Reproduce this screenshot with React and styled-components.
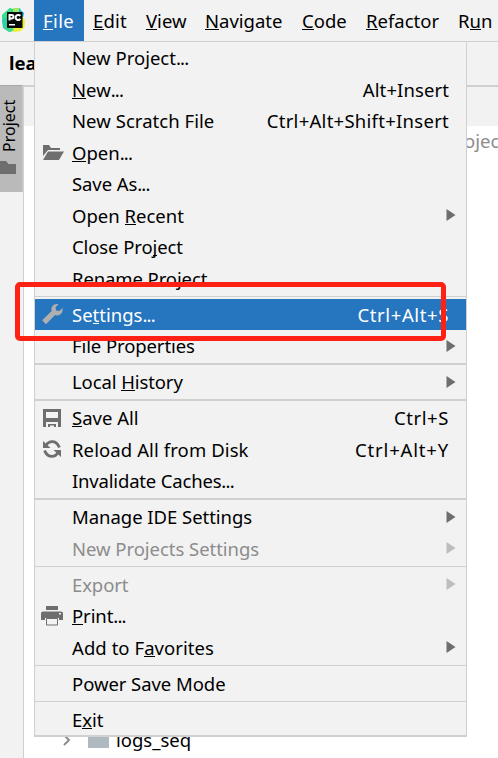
import React from "react";
import styled, { createGlobalStyle } from "styled-components";

const Global = createGlobalStyle`
  * { box-sizing: border-box; }
  body { margin: 0; overflow: hidden; background: #fff; }
`;

const Window = styled.div`
  position: relative;
  display: flex;
  flex-direction: column;
  width: 498px;
  height: 758px;
  overflow: hidden;
  background: #fff;
  color: #000;
  font: 18.5px "Noto Sans", "Open Sans", sans-serif;
  white-space: pre;
`;

const MenuBar = styled.header`
  display: flex;
  flex: none;
  height: 42px;
  background: #f2f2f2;
  border-bottom: 1px solid #d0d0d0;
`;

const Logo = styled.div`
  width: 34px;
  padding: 7px 0 0 1px;
`;

const MenuTitle = styled.div`
  flex: none;
  width: ${(p) => p.$width}px;
  height: 41px;
  padding-left: 9px;
  line-height: 42px;
  letter-spacing: ${(p) => p.$track || 0}px;
  color: ${(p) => (p.$open ? "#fff" : "#000")};
  background: ${(p) => (p.$open ? "#2675bf" : "transparent")};
`;

const Key = styled.span`
  box-shadow: inset 0 -1px 0 currentColor;
  display: inline-block;
  height: 21px;
  line-height: 23px;
`;

const Breadcrumb = styled.div`
  flex: none;
  height: 45px;
  padding-left: 9px;
  line-height: 42px;
  font-weight: 700;
  background: #f2f2f2;
  border-bottom: 2px solid #d0d0d0;
`;

const Body = styled.div`
  display: flex;
  flex: 1;
  min-height: 0;
`;

const Stripe = styled.aside`
  flex: none;
  width: 24px;
  margin-top: -2px;
  background: #f2f2f2;
  border-right: 1px solid #d0d0d0;
`;

const StripeButton = styled.div`
  display: flex;
  flex-direction: column;
  align-items: flex-start;
  width: 23px;
  height: 107px;
  padding-top: 11px;
  background: #bababa;
  border-top: 1px solid #a8a8a8;
  border-right: 1px solid #c8c8c8;
`;

const StripeLabel = styled.span`
  writing-mode: vertical-rl;
  transform: rotate(180deg);
  width: 18px;
  height: 55px;
  line-height: 18px;
  font-size: 16px;
`;

const FolderIcon = styled.svg`
  display: block;
  margin-top: 9px;
`;

const Panel = styled.main`
  display: flex;
  flex: 1;
  flex-direction: column;
`;

const PanelHeader = styled.div`
  flex: none;
  height: 39px;
  background: #f2f2f2;
`;

const Path = styled.div`
  flex: 1;
  padding-left: 440px;
  line-height: 30px;
  color: #8c8c8c;
`;

const TreeRow = styled.div`
  display: flex;
  align-items: center;
  height: 34px;
  padding: 0 0 3px 38px;
`;

const Swatch = styled.i`
  width: 21px;
  height: 16px;
  margin: 0 7px 0 16px;
  background: #aeb9c0;
`;

const Popup = styled.nav`
  position: absolute;
  left: 34px;
  top: 41px;
  width: 433px;
  height: 696px;
  background: #f2f2f2;
  border: 1px solid #d0d0d0;
  border-bottom-width: 2px;
`;

const Item = styled.div`
  display: flex;
  align-items: center;
  height: 31.5px;
  padding: 0 17px 0 7px;
  color: ${(p) => (p.$active ? "#fff" : p.$disabled ? "#8c8c8c" : "#000")};
  background: ${(p) => (p.$active ? "#2675bf" : "transparent")};
`;

const IconSlot = styled.span`
  display: flex;
  width: 30px;
`;

const Label = styled.span`
  flex: 1;
  line-height: 31px;
  letter-spacing: ${(p) => p.$track || 0}px;
`;

const Ellipsis = styled.span`
  letter-spacing: -0.8px;
`;

const Shortcut = styled.span`
  line-height: 31px;
  letter-spacing: ${(p) => p.$track || 0}px;
`;

const Arrow = styled.svg`
  display: block;
  margin-right: -7px;
  fill: ${(p) => (p.$disabled ? "#bdbdbd" : "#6e6e6e")};
`;

const PrintIcon = styled.svg`
  margin: 1px 0 0 -1px;
`;

const Separator = styled.div`
  height: 4.5px;
  padding-top: ${(p) => (p.$thick ? 1.5 : 2)}px;
  &::before {
    content: "";
    display: block;
    height: ${(p) => (p.$thick ? 2 : 1)}px;
    background: #d0d0d0;
  }
`;

const Highlight = styled.div`
  position: absolute;
  left: 15px;
  top: 282px;
  width: 431px;
  height: 59px;
  border: 5px solid #ff2113;
  border-radius: 5px;
`;

function PyCharm() {
  return (
    <svg width="25" height="26" viewBox="0 0 25 26">
      <path d="M1 8 9 1l5 2 5-2 3 8-6 14-8 2-6-4z" fill="#21d789" />
      <path d="M2 7 9 1l2 4-6 8-4 3z" fill="#3be08a" />
      <path d="M1 12l5-2v12l-4-2z" fill="#2fd0a8" />
      <path d="M12 1l6 0 1 5-7 1z" fill="#a5ea5c" />
      <path d="M18 2l5 4-1 5-4-1z" fill="#18b6e8" />
      <path d="M20 9l4 4-.5 7-3.500 4-7 1-4-3 11-3z" fill="#f0ee35" />
      <path d="M3 20l8 0 2 3-4 2z" fill="#45dc90" />
      <path d="M6 5h15.500v16H6z" fill="#080808" />
      <g fill="none" stroke="#fff" strokeWidth="2">
        <path d="M8.500 13.500V8h2.300a1.700 1.700 0 0 1 0 3.400H9" />
        <path d="M19.500 8.800c-2.300-1.900-5.200-.4-4.800 2.200.3 2.200 3 2.700 4.800 1" />
      </g>
      <path d="M8 17h6v1.500H8z" fill="#fff" />
    </svg>
  );
}

const icons = {
  open: (
    <svg width="22" height="17" viewBox="0 0 22 17" fill="#6e6e6e">
      <path d="M1 1h6l2 3h9v2H6L1 12z" />
      <path d="M6 7.5h16L17 16H1z" />
    </svg>
  ),
  wrench: (
    <svg width="22" height="22" viewBox="0 0 22 22" fill="#afafaf">
      <path d="M.2 17.3 9.6 8C8.9 5.4 10 2.8 12.2 1.6c1.3-.7 2.8-.8 4.3-.4l-3 3 .6 3.2 3.2.6 3.1-3c.8 3-.4 5.7-2.7 6.8-1.4.7-3 .8-4.5.2L3.9 21.3z" />
    </svg>
  ),
  save: (
    <svg width="20" height="20" viewBox="0 0 20 20" fill="#6e6e6e">
      <path fillRule="evenodd" d="M1 1h18v18h-3v-5H4v5H1zm3 3v6h12V4z" />
      <path d="M6 16h8v3h-2v-1.500H8V19H6z" />
    </svg>
  ),
  reload: (
    <svg width="20" height="20" viewBox="0 0 20 20">
      <g fill="none" stroke="#6e6e6e" strokeWidth="2.900">
        <path d="M4 6.500C7.2 1 14.5 1 17.4 8.500" />
        <path d="M16 13.500C12.8 19 5.5 19 2.600 11.500" />
      </g>
      <path d="M1 2v7h7.500zM19 18v-7h-7.500z" fill="#6e6e6e" />
    </svg>
  ),
  print: (
    <PrintIcon width="22" height="20" viewBox="0 0 22 20">
      <path d="M5 0h12v4H5z" fill="#6e6e6e" />
      <path fillRule="evenodd" d="M2 5.5h18q2 0 2 2V14h-4v-2H4v2H0V7.5q0-2 2-2zM18 7v1.5h2V7z" fill="#6e6e6e" />
      <path d="M5.5 12.5h11v6.5h-11z" fill="#f2f2f2" stroke="#6e6e6e" />
    </PrintIcon>
  ),
};

/* An underscore precedes the mnemonic letter of a label. */
function Mnemonic({ text }) {
  const dots = text.endsWith("...");
  const body = dots ? text.slice(0, -3) : text;
  const at = body.indexOf("_");
  return (
    <>
      {at < 0 ? body : body.slice(0, at)}
      {at >= 0 && <Key>{body[at + 1]}</Key>}
      {at >= 0 && body.slice(at + 2)}
      {dots && <Ellipsis>...</Ellipsis>}
    </>
  );
}

const titles = [
  { text: "_File", width: 50, track: 0.4, open: true },
  { text: "_Edit", width: 53, track: 0.2 },
  { text: "_View", width: 59 },
  { text: "_Navigate", width: 97 },
  { text: "_Code", width: 64 },
  { text: "_Refactor", width: 92 },
  { text: "R_un", width: 43 },
];

const items = [
  { text: "New Project..." },
  { text: "_New...", keys: "Alt+Insert", keyTrack: 0.1 },
  { text: "New Scratch File", track: 0.05, keys: "Ctrl+Alt+Shift+Insert", keyTrack: 0.27 },
  { text: "_Open..." },
  { text: "Save As...", track: -0.1 },
  { text: "Open _Recent", sub: true },
  { text: "Close Pro_ject", track: -0.1 },
  { text: "Rename Project", track: -0.1 },
  { line: "thin" },
  { text: "Se_ttings...", icon: "wrench", keys: "Ctrl+Alt+S", keyTrack: 0.62, active: true },
  { text: "File Properties", track: -0.1, sub: true },
  { line: "thick" },
  { text: "Local _History", track: -0.1, sub: true },
  { line: "thick" },
  { text: "_Save All", icon: "save", keys: "Ctrl+S", keyTrack: 0.6 },
  { text: "Reload All from Disk", track: 0.1, icon: "reload", keys: "Ctrl+Alt+Y", keyTrack: 0.82 },
  { text: "Invalidate Caches...", track: -0.18 },
  { line: "thick" },
  { text: "Manage IDE Settings", track: -0.04, sub: true },
  { text: "New Projects Settings", track: -0.04, sub: true, disabled: true },
  { line: "thin" },
  { text: "Export", track: -0.1, sub: true, disabled: true },
  { text: "_Print...", icon: "print", track: -0.1 },
  { text: "Add to F_avorites", track: 0.06, sub: true },
  { line: "thin" },
  { text: "Power Save Mode", track: -0.06 },
  { line: "thin" },
  { text: "E_xit" },
];
items[3].icon = "open";

export default function App() {
  return (
    <Window>
      <Global />
      <MenuBar>
        <Logo><PyCharm /></Logo>
        {titles.map((t) => (
          <MenuTitle key={t.text} $width={t.width} $track={t.track} $open={t.open}>
            <Mnemonic text={t.text} />
          </MenuTitle>
        ))}
      </MenuBar>
      <Breadcrumb>lea</Breadcrumb>
      <Body>
        <Stripe>
          <StripeButton>
            <StripeLabel>Project</StripeLabel>
            <FolderIcon width="16" height="13" viewBox="0 0 16 13" fill="#6e6e6e">
              <path d="M0 0h6l2.5 3H16v10H0z" />
            </FolderIcon>
          </StripeButton>
        </Stripe>
        <Panel>
          <PanelHeader />
          <Path>ojec</Path>
          <TreeRow>
            <svg width="10" height="14" viewBox="0 0 10 14" fill="none" stroke="#8c8c8c" strokeWidth="2">
              <path d="m2 2 5 5-5 5" />
            </svg>
            <Swatch />
            logs_seq
          </TreeRow>
        </Panel>
      </Body>
      <Popup>
        {items.map((item, i) =>
          item.line ? (
            <Separator key={i} $thick={item.line === "thick"} />
          ) : (
            <Item key={i} $active={item.active} $disabled={item.disabled}>
              <IconSlot>{icons[item.icon]}</IconSlot>
              <Label $track={item.track}><Mnemonic text={item.text} /></Label>
              {item.keys && <Shortcut $track={item.keyTrack}>{item.keys}</Shortcut>}
              {item.sub && (
                <Arrow $disabled={item.disabled} width="10" height="12" viewBox="0 0 10 12">
                  <path d="M.5 0 9.5 6 .5 12z" />
                </Arrow>
              )}
            </Item>
          )
        )}
      </Popup>
      <Highlight />
    </Window>
  );
}
